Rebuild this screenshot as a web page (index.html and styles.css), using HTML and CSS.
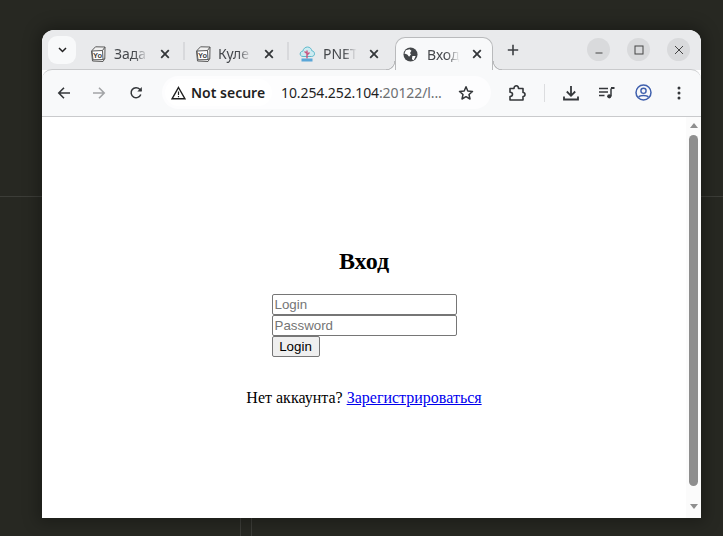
FILE: index.html
```html
<!DOCTYPE html>
<html lang="ru">
<head>
<meta charset="utf-8">
<title>Вход</title>
<link rel="stylesheet" href="styles.css">
</head>
<body>
<svg class="defs" width="0" height="0" aria-hidden="true">
  <symbol id="yobox" viewBox="0 0 16 16">
    <path d="M1.500 5 2.500 15 13 15.500 14.800 12.500 15 1 5.500 .8Z" fill="#f1f1f1" stroke="#5a5a5a" stroke-width="1" stroke-linejoin="round"/>
    <path d="M2 5 12.500 4.500 13 13.500 3 13.800Z" fill="#fff" stroke="#5a5a5a" stroke-width="1" stroke-linejoin="round"/>
    <path d="M12.500 4.500 15 1M13 13.500 14.800 12.500" stroke="#5a5a5a" stroke-width="1" fill="none"/>
  </symbol>
  <symbol id="close" viewBox="0 0 10 10">
    <path d="M1.200 1.200 8.800 8.800M8.800 1.200 1.200 8.800" stroke="#34373a" stroke-width="1.800" fill="none"/>
  </symbol>
</svg>
<main class="window">
  <div class="tabstrip">
    <button class="tabsearch" aria-label="Search tabs">
      <svg width="9" height="6" viewBox="0 0 9 6"><path d="M1 1 4.500 4.500 8 1" fill="none" stroke="#222" stroke-width="1.500"/></svg>
    </button>
    <div class="tab tab-one">
      <svg class="favicon" width="16" height="16" viewBox="0 0 16 16"><use href="#yobox"/><text x="7.500" y="11.800" text-anchor="middle" class="yo-text">Yo</text></svg>
      <span class="tab-title">Зада</span>
      <svg class="tab-close" width="10" height="10"><use href="#close"/></svg>
    </div>
    <i class="tab-sep"></i>
    <div class="tab tab-two">
      <svg class="favicon" width="16" height="16" viewBox="0 0 16 16"><use href="#yobox"/><text x="7.500" y="11.800" text-anchor="middle" class="yo-text">Yo</text></svg>
      <span class="tab-title">Куле</span>
      <svg class="tab-close" width="10" height="10"><use href="#close"/></svg>
    </div>
    <i class="tab-sep"></i>
    <div class="tab tab-three">
      <svg class="favicon" width="16" height="16" viewBox="0 0 16 16">
        <path d="M4 10.500C1.500 10.500 .8 8.500 1.300 7 1.800 5.600 3 5.200 3.800 5.300 4.300 2.600 6.300 1 8.500 1c2.300 0 4 1.700 4.300 3.800 1.700.1 2.700 1.500 2.700 3 0 1.600-1.200 2.700-3 2.700Z" fill="#cdebf1" stroke="#5cb8cb" stroke-width="1"/>
        <path d="M8 4.500V12.500M8 7.500 5.500 5.500M8 9 10.500 6.500" stroke="#c8557f" stroke-width="1.400" fill="none"/>
        <path d="M2.500 12.500H13.500V15.500H2.500Z" fill="#5aa6d8"/>
      </svg>
      <span class="tab-title">PNET</span>
      <svg class="tab-close" width="10" height="10"><use href="#close"/></svg>
    </div>
    <div class="tab tab-active">
      <svg class="favicon" width="15" height="15" viewBox="0 0 16 16">
        <circle cx="8" cy="8" r="7.500" fill="#44474a"/>
        <path d="M3 3.500 7 2.500 9 4 7.500 6.500 8.500 8 6.500 10.500 4.500 8 1.500 7ZM10 9.500H13.500L11.500 14 9.500 13Z" fill="#fff"/>
      </svg>
      <span class="tab-title">Вход</span>
      <svg class="tab-close" width="10" height="10"><use href="#close"/></svg>
    </div>
    <svg class="newtab" width="12" height="12" viewBox="0 0 12 12"><path d="M6 .8V11.200M.8 6H11.200" stroke="#3c3f43" stroke-width="1.600"/></svg>
    <div class="winctrls">
      <span class="winbtn"><svg width="10" height="10" viewBox="0 0 10 10"><path d="M1.500 8H8.500" stroke="#444" stroke-width="1"/></svg></span>
      <span class="winbtn"><svg width="10" height="10" viewBox="0 0 10 10"><rect x="1" y="1" width="8" height="8" fill="none" stroke="#444" stroke-width="1"/></svg></span>
      <span class="winbtn"><svg width="10" height="10" viewBox="0 0 10 10"><path d="M1 1 9 9M9 1 1 9" stroke="#444" stroke-width="1"/></svg></span>
    </div>
  </div>
  <div class="toolbar">
    <svg class="nav" width="14" height="14" viewBox="0 0 14 14"><path d="M13 7H2M7 1.800 1.800 7 7 12.200" fill="none" stroke="#34373a" stroke-width="1.600"/></svg>
    <svg class="nav nav-off" width="14" height="14" viewBox="0 0 14 14"><path d="M1 7H12M7 1.800 12.200 7 7 12.200" fill="none" stroke="#a2a4a6" stroke-width="1.600"/></svg>
    <svg class="nav nav-reload" width="14" height="14" viewBox="0 0 14 14"><path d="M11.800 8.500A5 5 0 1 1 10.800 3.300L12.300 4.800" fill="none" stroke="#34373a" stroke-width="1.500"/><path d="M12.800 1V5.500H8.300Z" fill="#34373a"/></svg>
    <div class="omnibox">
      <div class="chip">
        <svg width="15" height="14" viewBox="0 0 15 14"><path d="M7.500 1.500 14 12.800H1Z" fill="none" stroke="#1f1f1f" stroke-width="1.400"/><path d="M7.500 5.500V9M7.500 10V11.300" stroke="#1f1f1f" stroke-width="1.200"/></svg>
        <span>Not secure</span>
      </div>
      <span class="url">10.254.252.104<span class="url-rest">:20122/l...</span></span>
      <svg class="star" width="16" height="16" viewBox="0 0 16 16"><path d="M8 1.800 9.800 6 14.500 6.400 11 9.500 12 14 8 11.700 4 14 5 9.500 1.500 6.400 6.200 6Z" fill="none" stroke="#34373a" stroke-width="1.500" stroke-linejoin="round"/></svg>
    </div>
    <div class="tools">
      <svg class="puzzle" width="18" height="18" viewBox="0 0 18 18"><path d="M2 4.500H6C6 2.800 7 1.800 8.300 1.800S10.500 2.800 10.500 4.500H15V8.500C16.300 8.500 17 9.300 17 10.500S16.300 12.500 15 12.500V16H2V12.500C3.600 12.500 4.500 11.500 4.500 10.300S3.600 8.300 2 8.300Z" fill="none" stroke="#34373a" stroke-width="1.600" stroke-linejoin="round"/></svg>
      <i class="tool-sep"></i>
      <svg class="dl" width="16" height="16" viewBox="0 0 16 16"><path d="M8 1V10.500M3.800 6.500 8 10.800 12.200 6.500" fill="none" stroke="#34373a" stroke-width="1.800"/><path d="M1 11.500V14.500H15V11.500" fill="none" stroke="#34373a" stroke-width="1.800"/></svg>
      <svg class="media" width="16" height="12" viewBox="0 0 16 12"><path d="M0 1.500H9M0 5H9M0 8.500H5.500" stroke="#34373a" stroke-width="1.500"/><path d="M12 1.500V9" stroke="#34373a" stroke-width="1.500"/><path d="M12 1H15.500" stroke="#34373a" stroke-width="1.800"/><circle cx="10.300" cy="9.300" r="2.100" fill="#34373a"/></svg>
      <svg class="profile" width="17" height="17" viewBox="0 0 17 17"><circle cx="8.500" cy="8.500" r="7.500" fill="none" stroke="#3f60ad" stroke-width="1.500"/><circle cx="8.500" cy="6.800" r="2.600" fill="none" stroke="#3f60ad" stroke-width="1.400"/><path d="M3.700 13.200C5 11 12 11 13.300 13.200" fill="none" stroke="#3f60ad" stroke-width="1.400"/></svg>
      <svg class="menu" width="4" height="14" viewBox="0 0 4 14"><circle cx="2" cy="2" r="1.500" fill="#34373a"/><circle cx="2" cy="7" r="1.500" fill="#34373a"/><circle cx="2" cy="12" r="1.500" fill="#34373a"/></svg>
    </div>
  </div>
  <div class="viewport">
    <section class="page">
      <h2 class="title">Вход</h2>
      <form class="form">
        <input class="field" type="text" placeholder="Login">
        <input class="field" type="password" placeholder="Password">
        <button class="submit" type="button">Login</button>
      </form>
      <p class="signup">Нет аккаунта? <a href="#">Зарегистрироваться</a></p>
    </section>
    <div class="scrollbar">
      <i class="arrow-up"></i>
      <i class="thumb"></i>
      <i class="arrow-down"></i>
    </div>
  </div>
</main>
</body>
</html>
```
FILE: styles.css
```css
html, body {
  margin: 0;
  height: 100%;
  overflow: hidden;
}
body {
  background-color: #272822;
  background-image:
    linear-gradient(#3c3d38, #3c3d38),
    linear-gradient(#3c3d38, #3c3d38),
    linear-gradient(#3c3d38, #3c3d38);
  background-repeat: no-repeat;
  background-size: 723px 1px, 1px 18px, 1px 18px;
  background-position: 0 196px, 240px 518px, 251px 518px;
  font-family: "Liberation Serif", serif;
}
.defs { position: absolute; }
.yo-text { font: 700 7.500px "Liberation Sans", sans-serif; fill: #444; }

.window {
  position: absolute;
  left: 42px;
  top: 30px;
  width: 659px;
  height: 488px;
  display: flex;
  flex-direction: column;
  border-radius: 12px 12px 0 0;
  overflow: hidden;
  background: #fff;
  box-shadow: 0 0 16px 4px rgba(0, 0, 0, .3);
}

.tabstrip {
  height: 40px;
  flex: none;
  display: flex;
  align-items: flex-start;
  background: #e9eaec;
  font: 14px "Noto Sans", sans-serif;
  color: #45484c;
}
.tabsearch {
  width: 28px;
  height: 28px;
  margin: 6px 0 0 6px;
  padding: 0;
  border: 0;
  border-radius: 9px;
  background: #f8f9fa;
  display: flex;
  align-items: center;
  justify-content: center;
}
.tab {
  height: 33px;
  margin-top: 7px;
  display: flex;
  align-items: center;
  box-sizing: border-box;
}
.tab-one { width: 93px; margin-left: 14px; }
.tab-two { width: 92px; margin-left: 10px; }
.tab-three { width: 84px; margin-left: 10px; }
.favicon { flex: none; }
.tab-title {
  width: 35px;
  margin-left: 8px;
  white-space: nowrap;
  -webkit-mask-image: linear-gradient(90deg, #000 58%, transparent 96%);
  mask-image: linear-gradient(90deg, #000 58%, transparent 96%);
}
.tab-two .tab-title { margin-left: 7px; }
.tab-close { flex: none; margin-left: 11px; }
.tab-sep {
  width: 2px;
  height: 18px;
  margin-top: 12px;
  background: #d8d9dc;
}
.tab-active {
  position: relative;
  z-index: 1;
  width: 98px;
  margin-left: 12px;
  padding-left: 7px;
  background: #f8f9fa;
  border: 1px solid #b9babc;
  border-bottom: 0;
  border-radius: 10px 10px 0 0;
}
.tab-active::before,
.tab-active::after {
  content: "";
  position: absolute;
  bottom: 0;
  width: 9px;
  height: 9px;
}
.tab-active::before {
  left: -10px;
  background: radial-gradient(circle at 0 0, transparent 8px, #b9babc 8.500px, #b9babc 9px, #f8f9fa 9.500px);
}
.tab-active::after {
  right: -10px;
  background: radial-gradient(circle at 100% 0, transparent 8px, #b9babc 8.500px, #b9babc 9px, #f8f9fa 9.500px);
}
.tab-active .tab-title { margin-left: 9px; width: 34px; }
.tab-active .tab-close { margin-left: 11px; }
.newtab { margin: 14px 0 0 14px; }
.winctrls {
  margin: 8px 11px 0 auto;
  display: flex;
  gap: 17px;
}
.winbtn {
  width: 23px;
  height: 23px;
  border-radius: 50%;
  background: #d9dadc;
  display: flex;
  align-items: center;
  justify-content: center;
}

.toolbar {
  height: 48px;
  flex: none;
  box-sizing: border-box;
  margin-top: -1px;
  padding-bottom: 1px;
  border-top: 1px solid #c9cacc;
  border-bottom: 1px solid #c9cacc;
  border-radius: 10px 10px 0 0;
  display: flex;
  align-items: center;
  background: #f8f9fa;
}
.nav { flex: none; margin-left: 15px; }
.nav-off { margin-left: 21px; }
.nav-reload { margin-left: 23px; }
.omnibox {
  flex: none;
  width: 329px;
  height: 33px;
  margin-left: 19px;
  border-radius: 17px;
  background: #fdfdfe;
  display: flex;
  align-items: center;
  font: 14px "Noto Sans", sans-serif;
}
.chip {
  margin-left: 3px;
  height: 27px;
  width: 107px;
  box-sizing: border-box;
  padding-left: 6px;
  border-radius: 14px;
  background: #fff;
  display: flex;
  align-items: center;
  gap: 5px;
  font-weight: 600;
  font-size: 14px;
  color: #1f1f1f;
  white-space: nowrap;
}
.url {
  margin-left: 9px;
  width: 162px;
  font-size: 14px;
  letter-spacing: -.1px;
  color: #1f1f1f;
  white-space: nowrap;
}
.url-rest { color: #6c6f72; }
.star { flex: none; margin-left: 15px; }
.tools {
  display: flex;
  align-items: center;
}
.puzzle { margin-left: 17px; }
.tool-sep {
  width: 1px;
  height: 18px;
  margin-left: 18px;
  background: #dcdddf;
}
.dl { margin-left: 18px; }
.media { margin-left: 20px; }
.profile { margin-left: 20px; }
.menu { margin-left: 25px; }

.viewport {
  flex: 1;
  display: flex;
  min-height: 0;
  background: #fff;
}
.page {
  flex: 1;
  padding-top: 131px;
  text-align: center;
  color: #000;
  font-size: 16px;
}
.title {
  margin: 0 0 19px;
  font-size: 24px;
  line-height: 27px;
  font-weight: 700;
}
.form {
  width: 185px;
  margin: 0 auto;
  display: flex;
  flex-direction: column;
  align-items: flex-start;
}
.field {
  width: 185px;
  height: 21px;
  box-sizing: border-box;
  margin: 0;
  padding: 1px 2px;
  border: 1px solid #767676;
  border-radius: 2px;
  background: #fff;
  font: 13.333px "Liberation Sans", sans-serif;
}
.field::placeholder { color: #757575; opacity: 1; }
.submit {
  width: 48px;
  height: 21px;
  box-sizing: border-box;
  margin: 0;
  padding: 1px 6px;
  border: 1px solid #767676;
  border-radius: 2px;
  background: #efefef;
  color: #000;
  font: 13.333px "Liberation Sans", sans-serif;
}
.signup {
  margin: 32px 0 0;
  line-height: 18px;
}
.signup a { color: #00e; }

.scrollbar {
  flex: none;
  width: 15px;
  display: flex;
  flex-direction: column;
  align-items: center;
  background: #fbfbfb;
}
.arrow-up, .arrow-down {
  width: 0;
  height: 0;
  border-left: 4px solid transparent;
  border-right: 4px solid transparent;
}
.arrow-up { margin-top: 6px; border-bottom: 5px solid #8e8e8e; }
.arrow-down { margin-top: 18px; border-top: 5px solid #8e8e8e; }
.thumb {
  width: 9px;
  height: 351px;
  margin-top: 7px;
  border-radius: 5px;
  background: #8e8e8e;
}
```
